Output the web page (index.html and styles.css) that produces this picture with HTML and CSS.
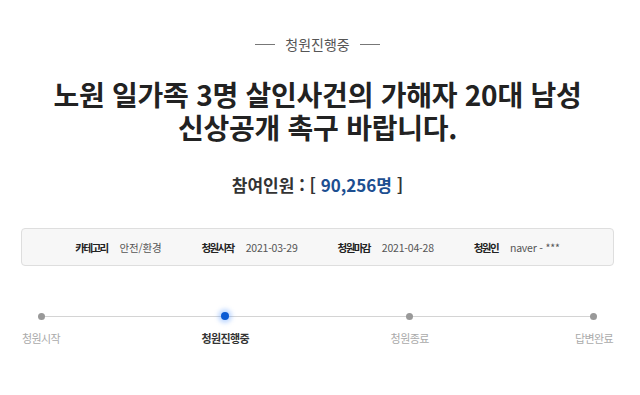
FILE: index.html
```html
<!DOCTYPE html>
<html lang="ko">
<head>
    <meta charset="UTF-8">
    <meta name="viewport" content="width=device-width, initial-scale=1.0">
    <title>청원진행중</title>
    <link rel="stylesheet" href="styles.css">
</head>
<body>
    <div class="petition">
        <div class="state"><span class="state-line"></span>청원진행중<span class="state-line"></span></div>

        <h1 class="title">
            <span class="title-line">노원 일가족 3명 살인사건의 가해자 20대 남성</span>
            <span class="title-line">신상공개 촉구 바랍니다.</span>
        </h1>

        <p class="count">참여인원 : [ <span class="count-num">90,256명</span> ]</p>

        <ul class="info">
            <li><strong>카테고리</strong><span>안전/환경</span></li>
            <li><strong>청원시작</strong><span>2021-03-29</span></li>
            <li><strong>청원마감</strong><span>2021-04-28</span></li>
            <li><strong>청원인</strong><span>naver - ***</span></li>
        </ul>

        <ol class="steps">
            <li class="step"><i class="dot"></i><span>청원시작</span></li>
            <li class="step active"><i class="dot"></i><span>청원진행중</span></li>
            <li class="step"><i class="dot"></i><span>청원종료</span></li>
            <li class="step"><i class="dot"></i><span>답변완료</span></li>
        </ol>
    </div>
</body>
</html>
```

FILE: styles.css
```css
body { margin: 0; background: #fff; font-family: "Noto Sans CJK KR", "Noto Sans", sans-serif; color: #333; }
.petition { padding: 34px 26px 0 21px; }

.state { display: flex; justify-content: center; align-items: center; gap: 10px; height: 20px; font-size: 14px; color: #555; }
.state-line { width: 20px; height: 1px; background: #777; }

.title { display: flex; flex-direction: column; align-items: center; margin: 24px 0 0; font-size: 28px; font-weight: 700; color: #222; letter-spacing: -0.25px; }
.title-line { display: block; height: 33px; line-height: 33px; white-space: nowrap; }

.count { margin: 29px 0 0; text-align: center; font-size: 17px; line-height: 24px; font-weight: 700; color: #333; }
.count-num { color: #1d4f91; }

.info { display: flex; justify-content: center; gap: 40px; margin: 31px 0 0; padding: 0; height: 36px; align-items: center; list-style: none;
    background: #f7f7f7; border: 1px solid #dedede; border-radius: 4px; font-size: 10.5px; }
.info li { display: flex; gap: 12px; align-items: center; }
.info strong { color: #222; letter-spacing: -1.6px; }
.info span { color: #555; letter-spacing: -0.2px; }

.steps { position: relative; display: flex; justify-content: space-between; margin: 46px 0 0; padding: 0; list-style: none; }
.steps::before { content: ""; position: absolute; left: 20px; right: 20px; top: 4px; height: 1px; background: #d4d4d4; }
.step { position: relative; width: 40px; display: flex; flex-direction: column; align-items: center; gap: 10px; }
.dot { width: 7px; height: 7px; margin-top: 1px; border-radius: 50%; background: #999; }
.step span { white-space: nowrap; font-size: 11px; line-height: 16px; color: #aaa; letter-spacing: -0.6px; }
.step.active .dot { width: 8px; height: 8px; margin-top: 0; background: #0b5bd3; box-shadow: 0 0 4px 3px rgba(80, 150, 255, 0.35); }
.step.active span { color: #333; font-weight: 700; }
```
